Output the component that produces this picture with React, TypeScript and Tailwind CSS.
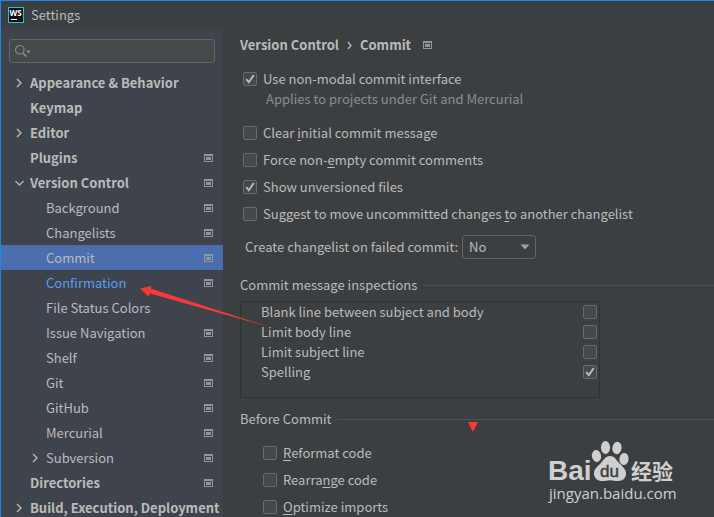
import { useState } from "react";
import type { ReactNode } from "react";

interface TreeItem {
  label: string;
  level: number;
  arrow?: "right" | "down";
  project?: boolean;
  modified?: boolean;
}

const treeItems: TreeItem[] = [
  { label: "Appearance & Behavior", level: 0, arrow: "right" },
  { label: "Keymap", level: 0 },
  { label: "Editor", level: 0, arrow: "right" },
  { label: "Plugins", level: 0, project: true },
  { label: "Version Control", level: 0, arrow: "down", project: true },
  { label: "Background", level: 1, project: true },
  { label: "Changelists", level: 1, project: true },
  { label: "Commit", level: 1, project: true },
  { label: "Confirmation", level: 1, project: true, modified: true },
  { label: "File Status Colors", level: 1 },
  { label: "Issue Navigation", level: 1, project: true },
  { label: "Shelf", level: 1, project: true },
  { label: "Git", level: 1, project: true },
  { label: "GitHub", level: 1, project: true },
  { label: "Mercurial", level: 1, project: true },
  { label: "Subversion", level: 1, arrow: "right", project: true },
  { label: "Directories", level: 0, project: true },
  { label: "Build, Execution, Deployment", level: 0, arrow: "right" },
];

const inspections = [
  { label: "Blank line between subject and body", enabled: false },
  { label: "Limit body line", enabled: false },
  { label: "Limit subject line", enabled: false },
  { label: "Spelling", enabled: true },
];

function ProjectIcon() {
  return (
    <svg width="9" height="8" viewBox="0 0 9 8" className="shrink-0" shapeRendering="crispEdges">
      <path fill="#8c979e" fillRule="evenodd" d="M0 0h9v8H0zM1 2v5h7V2z" />
      <path fill="#8c979e" d="M2 3h5v3H2z" />
    </svg>
  );
}

function Chevron({ direction }: { direction: "right" | "down" }) {
  return (
    <svg width="10" height="10" viewBox="0 0 10 10" fill="none" stroke="#afb1b3" strokeWidth="1.5">
      <path d={direction === "right" ? "M2 1l4 4-4 4" : "M0.500 3l4 4 4-4"} />
    </svg>
  );
}

// Underlined mnemonic letter
function Key({ children }: { children: ReactNode }) {
  return <span className="underline underline-offset-2">{children}</span>;
}

function Box({ id, defaultChecked }: { id: string; defaultChecked?: boolean }) {
  return (
    <span className="grid shrink-0">
      <input
        id={id}
        type="checkbox"
        defaultChecked={defaultChecked}
        className="peer col-start-1 row-start-1 size-3.5 appearance-none rounded-[2px] border border-[#6b6b6b] bg-[#43494a]"
      />
      <svg
        viewBox="0 0 14 14"
        className="pointer-events-none invisible col-start-1 row-start-1 size-3.5 peer-checked:visible"
        fill="none"
        stroke="#bbbbbb"
        strokeWidth="2"
      >
        <path d="M3.2 7.2l2.6 3L10.8 3" />
      </svg>
    </span>
  );
}

function Option({ id, checked, children }: { id: string; checked?: boolean; children: ReactNode }) {
  return (
    <div className="flex h-5 items-center gap-1.5">
      <Box id={id} defaultChecked={checked} />
      <label htmlFor={id}>{children}</label>
    </div>
  );
}

function SectionTitle({ children }: { children: ReactNode }) {
  return (
    <div className="flex h-5 items-center gap-1.5">
      <h2>{children}</h2>
      <div className="h-px flex-1 bg-[#515151]" />
    </div>
  );
}

function Sidebar() {
  const [selected, setSelected] = useState("Commit");

  return (
    <aside className="w-[222px] shrink-0 bg-[#3f434c]">
      <div className="relative mt-2.5 mr-2 mb-[7px] ml-2">
        <input
          type="text"
          aria-label="Search settings"
          className="block h-6 w-full rounded-[3px] border border-[#646464] bg-[#45494a] pr-2 pl-8 outline-none"
        />
        <svg
          width="18"
          height="14"
          viewBox="0 0 18 14"
          className="pointer-events-none absolute top-1.5 left-1.5"
          fill="none"
          stroke="#7f8b91"
        >
          <circle cx="4.8" cy="4.8" r="4.3" strokeWidth="1.2" />
          <path d="M8 8l3.4 3.600" strokeWidth="1.6" />
          <path d="M11 5.500h5l-2.500 3z" fill="#7f8b91" stroke="none" />
        </svg>
      </div>
      <nav>
        {treeItems.map((item) => (
          <button
            key={item.label}
            type="button"
            onClick={() => setSelected(item.label)}
            className={`flex h-[25px] w-full items-center pr-2.5 text-left whitespace-nowrap ${
              item.level === 0 ? "pl-3.5 font-bold" : "pl-[30px]"
            } ${selected === item.label ? "bg-[#4b6eaf]" : ""} ${
              item.modified ? "text-[#589df6]" : ""
            }`}
          >
            <span className="w-[15px] shrink-0">
              {item.arrow && <Chevron direction={item.arrow} />}
            </span>
            <span className="flex-1">{item.label}</span>
            {item.project && <ProjectIcon />}
          </button>
        ))}
      </nav>
    </aside>
  );
}

function CommitSettings() {
  return (
    <main className="min-w-0 flex-1 pl-[17px]">
      <div className="flex h-8 items-center font-bold">
        <span>Version Control</span>
        <svg width="5" height="9" viewBox="0 0 5 9" className="mr-2 ml-2" fill="none" stroke="#bbbbbb">
          <path d="M1 1l3 3.500L1 8" strokeWidth="1.3" />
        </svg>
        <h1 className="mr-3">Commit</h1>
        <ProjectIcon />
      </div>

      <div className="mt-2 pl-[3px]">
        <Option id="non-modal" checked>
          Use non-modal commit interface
        </Option>
        <p className="h-5 pl-[23px] leading-5 text-[#8c8c8c]">Applies to projects under Git and Mercurial</p>
        <div className="mt-3.5 flex flex-col gap-[7px]">
          <Option id="clear-message">
            Clear <Key>i</Key>nitial commit message
          </Option>
          <Option id="force-comments">
            Force non-<Key>e</Key>mpty commit comments
          </Option>
          <Option id="show-unversioned" checked>
            Show unversioned files
          </Option>
          <Option id="suggest-move">
            Suggest to move uncommitted changes <Key>t</Key>o another changelist
          </Option>
        </div>
        <div className="mt-[11px] flex h-6 items-center gap-1 pl-0.5">
          <label htmlFor="failed-commit">Create changelist on failed commit:</label>
          <div className="relative">
            <select
              id="failed-commit"
              className="block h-6 w-[74px] appearance-none rounded-[3px] border border-[#646464] bg-[#3c3f41] pl-1.5"
            >
              <option>No</option>
              <option>Yes</option>
              <option>Ask</option>
            </select>
            <svg
              width="10"
              height="6"
              viewBox="0 0 10 6"
              className="pointer-events-none absolute top-[9px] right-1.5"
            >
              <path d="M0.500 0.500h9L5 5.500z" fill="#9da0a2" />
            </svg>
          </div>
        </div>
      </div>

      <section className="mt-4">
        <SectionTitle>Commit message inspections</SectionTitle>
        <div className="mt-1.5 h-[97px] w-[360px] border border-[#323232] pr-0.5 pl-5">
          {inspections.map((item, i) => (
            <div key={item.label} className="flex h-5 items-center justify-between">
              <label htmlFor={`inspection-${i}`}>{item.label}</label>
              <Box id={`inspection-${i}`} defaultChecked={item.enabled} />
            </div>
          ))}
        </div>
      </section>

      <section className="mt-[11px]">
        <SectionTitle>Before Commit</SectionTitle>
        <div className="mt-3.5 flex flex-col gap-[7px] pl-[23px]">
          <Option id="reformat">
            <Key>R</Key>eformat code
          </Option>
          <Option id="rearrange">
            Rearra<Key>n</Key>ge code
          </Option>
          <Option id="optimize">
            <Key>O</Key>ptimize imports
          </Option>
        </div>
      </section>
    </main>
  );
}

function Watermark() {
  return (
    <div className="pointer-events-none absolute top-[438px] left-[546px] text-[#cfcfcf]">
      <svg width="130" height="46" viewBox="0 0 130 46" className="block">
        <text x="1" y="41" fontSize="28" fontWeight="700" fill="#cfcfcf" fontFamily="Liberation Sans, sans-serif">
          Bai
        </text>
        <g fill="#cfcfcf">
          <ellipse cx="49.500" cy="17" rx="4.600" ry="6" transform="rotate(-10 49.500 17)" />
          <ellipse cx="58.500" cy="8.500" rx="4.600" ry="6.500" />
          <ellipse cx="70" cy="9" rx="4.600" ry="6.200" transform="rotate(10 70 9)" />
          <ellipse cx="77" cy="20" rx="4.600" ry="6" transform="rotate(8 77 20)" />
          <path d="M63 17c-5 0-7 5-10 8-3 3-6 5-6 9.500 0 5 4 7.500 8 7.500 3 0 5-.8 8-.8s5 .8 8 .8c5 0 8-3 8-7.500 0-4-3-6.500-6-9.500-3-3-5-8-10-8z" />
        </g>
        <text x="53" y="38" fontSize="17" fontWeight="400" fill="#3c3f41" stroke="#3c3f41" strokeWidth="0.500" fontFamily="Liberation Sans, sans-serif">
          du
        </text>
        <text x="84" y="40" fontSize="21" fontWeight="700" fill="#cfcfcf" fontFamily="Noto Sans CJK SC, sans-serif">
          经验
        </text>
      </svg>
      <p className="pl-0.5 font-['Open_Sans',sans-serif] text-[15px] leading-4">jingyan.baidu.com</p>
    </div>
  );
}

export default function App() {
  return (
    <div className="relative flex h-screen flex-col overflow-hidden border-t border-l border-[#1e88e5] bg-[#3c3f41] font-['Noto_Sans_CJK_SC','Noto_Sans',sans-serif] text-[13px] leading-5 text-[#bbbbbb]">
      <header className="flex h-7 shrink-0 items-center gap-[7px] pl-[7px]">
        <svg width="16" height="16" viewBox="0 0 16 16">
          <rect x="0.500" y="0.500" width="15" height="15" fill="#101010" stroke="#21c3e8" />
          <text x="1.500" y="9" fontSize="8" fontWeight="700" fill="#ffffff" fontFamily="Open Sans, sans-serif">
            WS
          </text>
          <path d="M3 12h6v1H3z" fill="#ffffff" />
        </svg>
        <span>Settings</span>
      </header>
      <div className="flex min-h-0 flex-1">
        <Sidebar />
        <CommitSettings />
      </div>

      {/* annotation marks */}
      <svg width="130" height="46" viewBox="0 0 130 46" className="pointer-events-none absolute top-[283px] left-[138px]">
        <path d="M1 4.500L12.500 2l-.8 2.500L130 43 11 9.500l-1.500 3z" fill="#fb3838" />
      </svg>
      <svg width="10" height="10" viewBox="0 0 10 10" className="pointer-events-none absolute top-[421px] left-[467px]">
        <path d="M0 0h10L5 10z" fill="#fb3838" />
      </svg>
      <Watermark />
    </div>
  );
}
